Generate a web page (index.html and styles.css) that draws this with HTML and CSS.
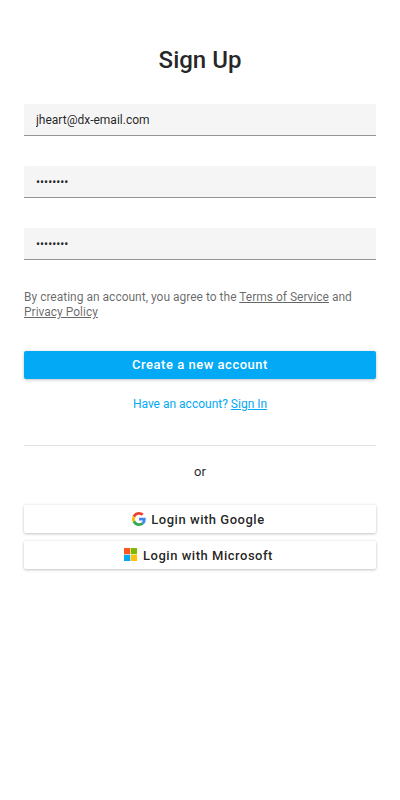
FILE: index.html
```html
<!DOCTYPE html>
<html lang="en">
<head>
<meta charset="utf-8">
<title>Sign Up</title>
<link rel="stylesheet" href="styles.css">
</head>
<body>
<main class="card">
  <h1 class="title">Sign Up</h1>
  <form class="form">
    <input class="field" type="text" value="jheart@dx-email.com">
    <input class="field" type="password" value="password">
    <input class="field" type="password" value="password">
    <p class="policy">By creating an account, you agree to the <a href="#">Terms of Service</a> and <a href="#">Privacy Policy</a></p>
    <button class="button primary" type="button">Create a new account</button>
    <p class="login">Have an account? <a href="#">Sign In</a></p>
  </form>
  <div class="divider"></div>
  <p class="or">or</p>
  <div class="social">
    <button class="button provider" type="button">
      <svg class="icon" viewBox="0 0 48 48"><path fill="#EA4335" d="M24 9.5c3.54 0 6.71 1.22 9.21 3.6l6.85-6.85C35.9 2.38 30.47 0 24 0 14.62 0 6.51 5.38 2.56 13.22l7.98 6.19C12.43 13.72 17.74 9.5 24 9.5z"/><path fill="#4285F4" d="M46.98 24.55c0-1.57-.15-3.09-.38-4.55H24v9.02h12.94c-.58 2.96-2.26 5.48-4.78 7.18l7.73 6c4.51-4.18 7.09-10.36 7.09-17.65z"/><path fill="#FBBC05" d="M10.53 28.59c-.48-1.45-.76-2.99-.76-4.59s.27-3.14.76-4.59l-7.98-6.19C.92 16.46 0 20.12 0 24c0 3.88.92 7.54 2.56 10.78l7.97-6.19z"/><path fill="#34A853" d="M24 48c6.48 0 11.93-2.13 15.89-5.81l-7.73-6c-2.15 1.45-4.92 2.3-8.16 2.3-6.26 0-11.57-4.22-13.47-9.91l-7.98 6.19C6.51 42.62 14.62 48 24 48z"/></svg>
      <span class="label">Login with Google</span>
    </button>
    <button class="button provider" type="button">
      <svg class="icon" viewBox="0 0 14 14"><path fill="#ff5722" d="M0 0h6.2v6.2H0z"/><path fill="#7fba00" d="M6.8 0H13v6.2H6.8z"/><path fill="#03a9f4" d="M0 6.8h6.2V13H0z"/><path fill="#ffc107" d="M6.8 6.8H13V13H6.8z"/></svg>
      <span class="label">Login with Microsoft</span>
    </button>
  </div>
</main>
</body>
</html>
```
FILE: styles.css
```css
* { box-sizing: border-box; }
body { margin: 0; min-height: 100vh; background: #fff; color: rgba(0,0,0,.87); font: 12px/15px Roboto, "Liberation Sans", sans-serif; }
.card { padding: 44px 24px 24px; }
.title { margin: 0 0 28px; font-size: 24px; line-height: 32px; font-weight: 500; text-align: center; }
.form { display: flex; flex-direction: column; }
.field { width: 100%; height: 32px; margin: 0 0 30px; padding: 1px 12px 0; border: 0; border-bottom: 1px solid #949494; border-radius: 2px 2px 0 0; outline: 0; background: #f5f5f5; color: rgba(0,0,0,.87); font: inherit; }
.policy { margin: 0 0 31px; color: rgba(0,0,0,.6); }
.policy a, .login a { color: inherit; text-decoration: underline; }
.button { display: flex; align-items: center; justify-content: center; gap: 5px; width: 100%; height: 28px; padding: 0; border: 0; border-radius: 2px; background: #fff; color: rgba(0,0,0,.87); font: 500 13px/16px Roboto, "Liberation Sans", sans-serif; letter-spacing: .04em; box-shadow: 0 1px 3px rgba(0,0,0,.24), 0 -1px 3px rgba(0,0,0,.03); }
.primary { background: #03a9f4; color: #fff; }
.provider { padding-right: 3px; }
.label { padding-top: 2px; }
.login { margin: 18px 0 0; color: #03a9f4; text-align: center; }
.divider { height: 1px; margin-top: 33px; background: #e0e0e0; }
.or { margin: 18px 0 26px; font-size: 13px; text-align: center; }
.social { display: flex; flex-direction: column; gap: 8px; }
.icon { width: 14px; height: 14px; }
```
